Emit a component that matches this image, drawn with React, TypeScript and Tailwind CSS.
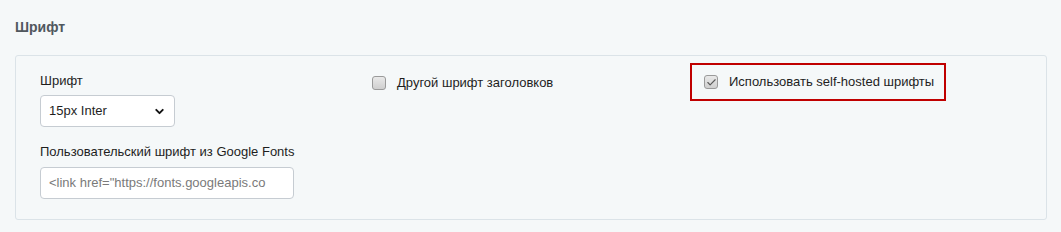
import { Check, ChevronDown } from 'lucide-react'

function Box({ checked }: { checked?: boolean }) {
  return (
    <span className="flex h-[14px] w-[14px] shrink-0 items-center justify-center rounded-[3px] border border-[#9a9a9a] bg-gradient-to-b from-[#e9e9e9] to-[#cfcfcf]">
      {checked && <Check size={11} strokeWidth={2.5} className="text-[#5a5a5a]" />}
    </span>
  )
}

export default function App() {
  return (
    <div
      className="h-[232px] w-[1061px] bg-[#f5f8f9] pl-[15px] pr-[15px] pt-[18px] text-[13px] text-[#1e1e1e]"
      style={{ fontFamily: '"Liberation Sans", Arial, sans-serif' }}
    >
      <h2 className="text-[14px] font-bold leading-[18px] text-[#50575e]">Шрифт</h2>
      <div className="mt-[19px] grid h-[165px] w-[1032px] grid-cols-[332px_332px_1fr] rounded-[3px] border border-[#dbe3e8] pl-[24px] pt-[16px]">
        <div>
          <div className="mb-[5px] leading-[18px]">Шрифт</div>
          <div className="flex h-[32px] w-[135px] items-center justify-between rounded-[4px] border border-[#c6ccd2] bg-white pl-[8px] pr-[8px]">
            <span>15px Inter</span>
            <ChevronDown size={13} strokeWidth={3.5} className="text-[#111]" />
          </div>
          <div className="mt-[16px] mb-[6px] leading-[18px]">Пользовательский шрифт из Google Fonts</div>
          <div className="flex h-[32px] w-[254px] items-center rounded-[4px] border border-[#c6ccd2] bg-white pl-[8px] text-[#7a7a7a]">
            &lt;link href="https://fonts.googleapis.co
          </div>
        </div>
        <div>
          <label className="mt-[2px] flex items-center gap-[11px] leading-[18px]">
            <Box />
            <span>Другой шрифт заголовков</span>
          </label>
        </div>
        <div>
          <div className="-ml-[14px] -mt-[9px] flex h-[38px] w-[256px] items-center gap-[11px] border-2 border-[#c00000] pl-[12px] leading-[18px]">
            <Box checked />
            <span>Использовать self-hosted шрифты</span>
          </div>
        </div>
      </div>
    </div>
  )
}
